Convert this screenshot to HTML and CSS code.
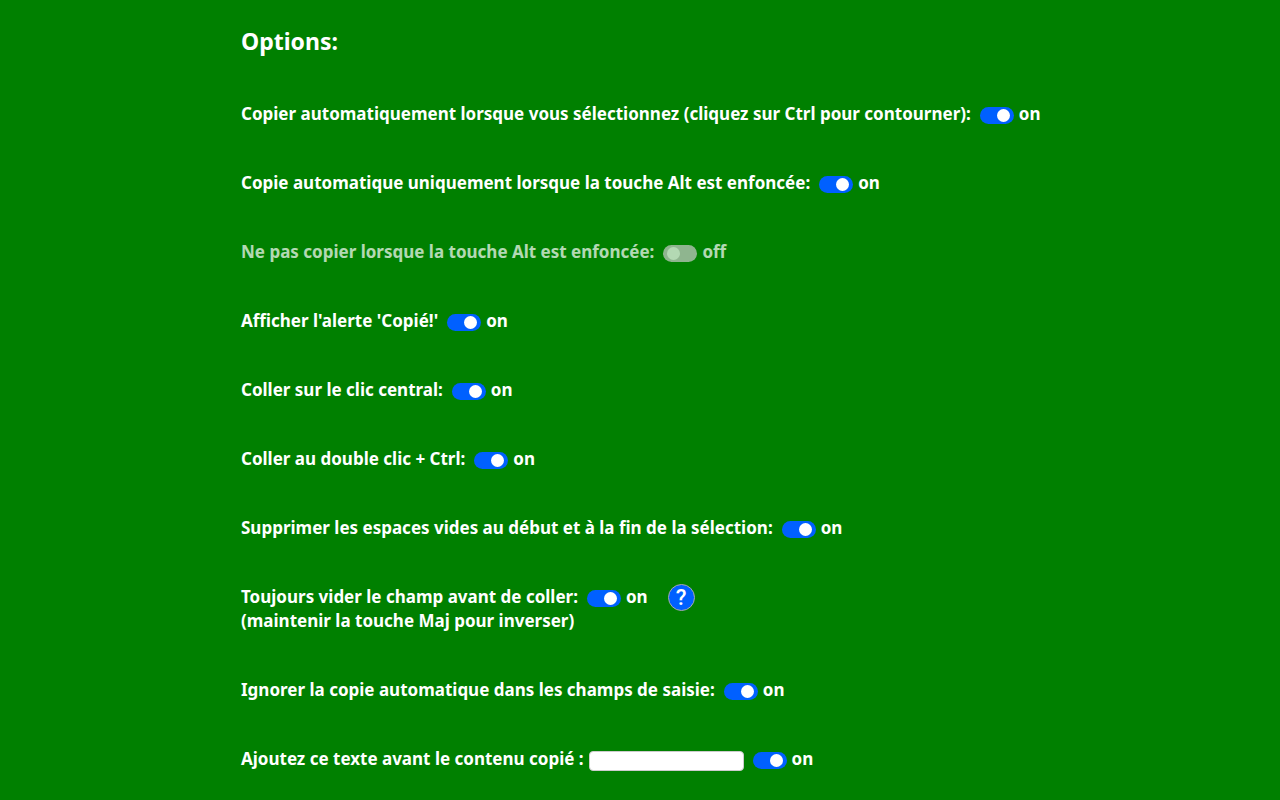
FILE: index.html
```html
<!DOCTYPE html>
<html lang="fr">
<head>
<meta charset="utf-8">
<title>Options</title>
<link rel="stylesheet" href="styles.css">
</head>
<body>
<main class="options">
<h1 class="title">Options:</h1>
<div class="option"><label for="o1">Copier automatiquement lorsque vous sélectionnez (cliquez sur Ctrl pour contourner):</label><input class="switch" type="checkbox" id="o1" checked><span>on</span></div>
<div class="option"><label for="o2">Copie automatique uniquement lorsque la touche Alt est enfoncée:</label><input class="switch" type="checkbox" id="o2" checked><span>on</span></div>
<div class="option disabled"><label for="o3">Ne pas copier lorsque la touche Alt est enfoncée:</label><input class="switch" type="checkbox" id="o3" disabled><span>off</span></div>
<div class="option"><label for="o4">Afficher l'alerte 'Copié!'</label><input class="switch" type="checkbox" id="o4" checked><span>on</span></div>
<div class="option"><label for="o5">Coller sur le clic central:</label><input class="switch" type="checkbox" id="o5" checked><span>on</span></div>
<div class="option"><label for="o6">Coller au double clic + Ctrl:</label><input class="switch" type="checkbox" id="o6" checked><span>on</span></div>
<div class="option"><label for="o7">Supprimer les espaces vides au début et à la fin de la sélection:</label><input class="switch" type="checkbox" id="o7" checked><span>on</span></div>
<div class="option-group">
<div class="option"><label for="o8">Toujours vider le champ avant de coller:</label><input class="switch" type="checkbox" id="o8" checked><span>on</span><button class="help" type="button">?</button></div>
<p class="note">(maintenir la touche Maj pour inverser)</p>
</div>
<div class="option"><label for="o9">Ignorer la copie automatique dans les champs de saisie:</label><input class="switch" type="checkbox" id="o9" checked><span>on</span></div>
<div class="option"><label for="prefix">Ajoutez ce texte avant le contenu copié :</label><input class="text" type="text" id="prefix"><input class="switch" type="checkbox" id="o10" aria-label="Activer" checked><span>on</span></div>
</main>
</body>
</html>
```
FILE: styles.css
```css
body {
  margin: 0;
  background: #008000;
  color: #fff;
  font: bold 17px/24px "Segoe UI", "Noto Sans", "Open Sans", sans-serif;
}
.options {
  display: flex;
  flex-direction: column;
  gap: 45px;
  box-sizing: border-box;
  max-width: 800px;
  margin: 0 auto;
  padding: 25px 0 28px 1px;
}
.title {
  margin: 0;
  font-size: 23px;
  line-height: 32px;
}
.option {
  display: flex;
  align-items: center;
  height: 24px;
  white-space: nowrap;
}
.disabled { opacity: .7; }
.switch {
  appearance: none;
  display: flex;
  align-items: center;
  justify-content: flex-end;
  flex: none;
  box-sizing: border-box;
  width: 34px;
  height: 17px;
  margin: 3px 5px 0 9px;
  padding: 2px 4px;
  border-radius: 9px;
  background: #0060ff;
}
.switch::before {
  content: "";
  width: 13px;
  height: 13px;
  border-radius: 50%;
  background: #fff;
}
.switch:disabled {
  justify-content: flex-start;
  background: #ccc;
}
.text {
  box-sizing: border-box;
  width: 155px;
  height: 20px;
  margin: 3px 0 0 5px;
  border: 1px solid #ccc;
  border-radius: 4px;
  background: #fff;
}
.help {
  box-sizing: border-box;
  width: 27px;
  height: 27px;
  margin: 1px 0 0 20px;
  padding: 0;
  border: 1px solid #aaa;
  border-radius: 50%;
  background: #0060ff;
  color: #fff;
  font: 500 22px/25px Roboto, sans-serif;
}
.note { margin: 0; }
```
